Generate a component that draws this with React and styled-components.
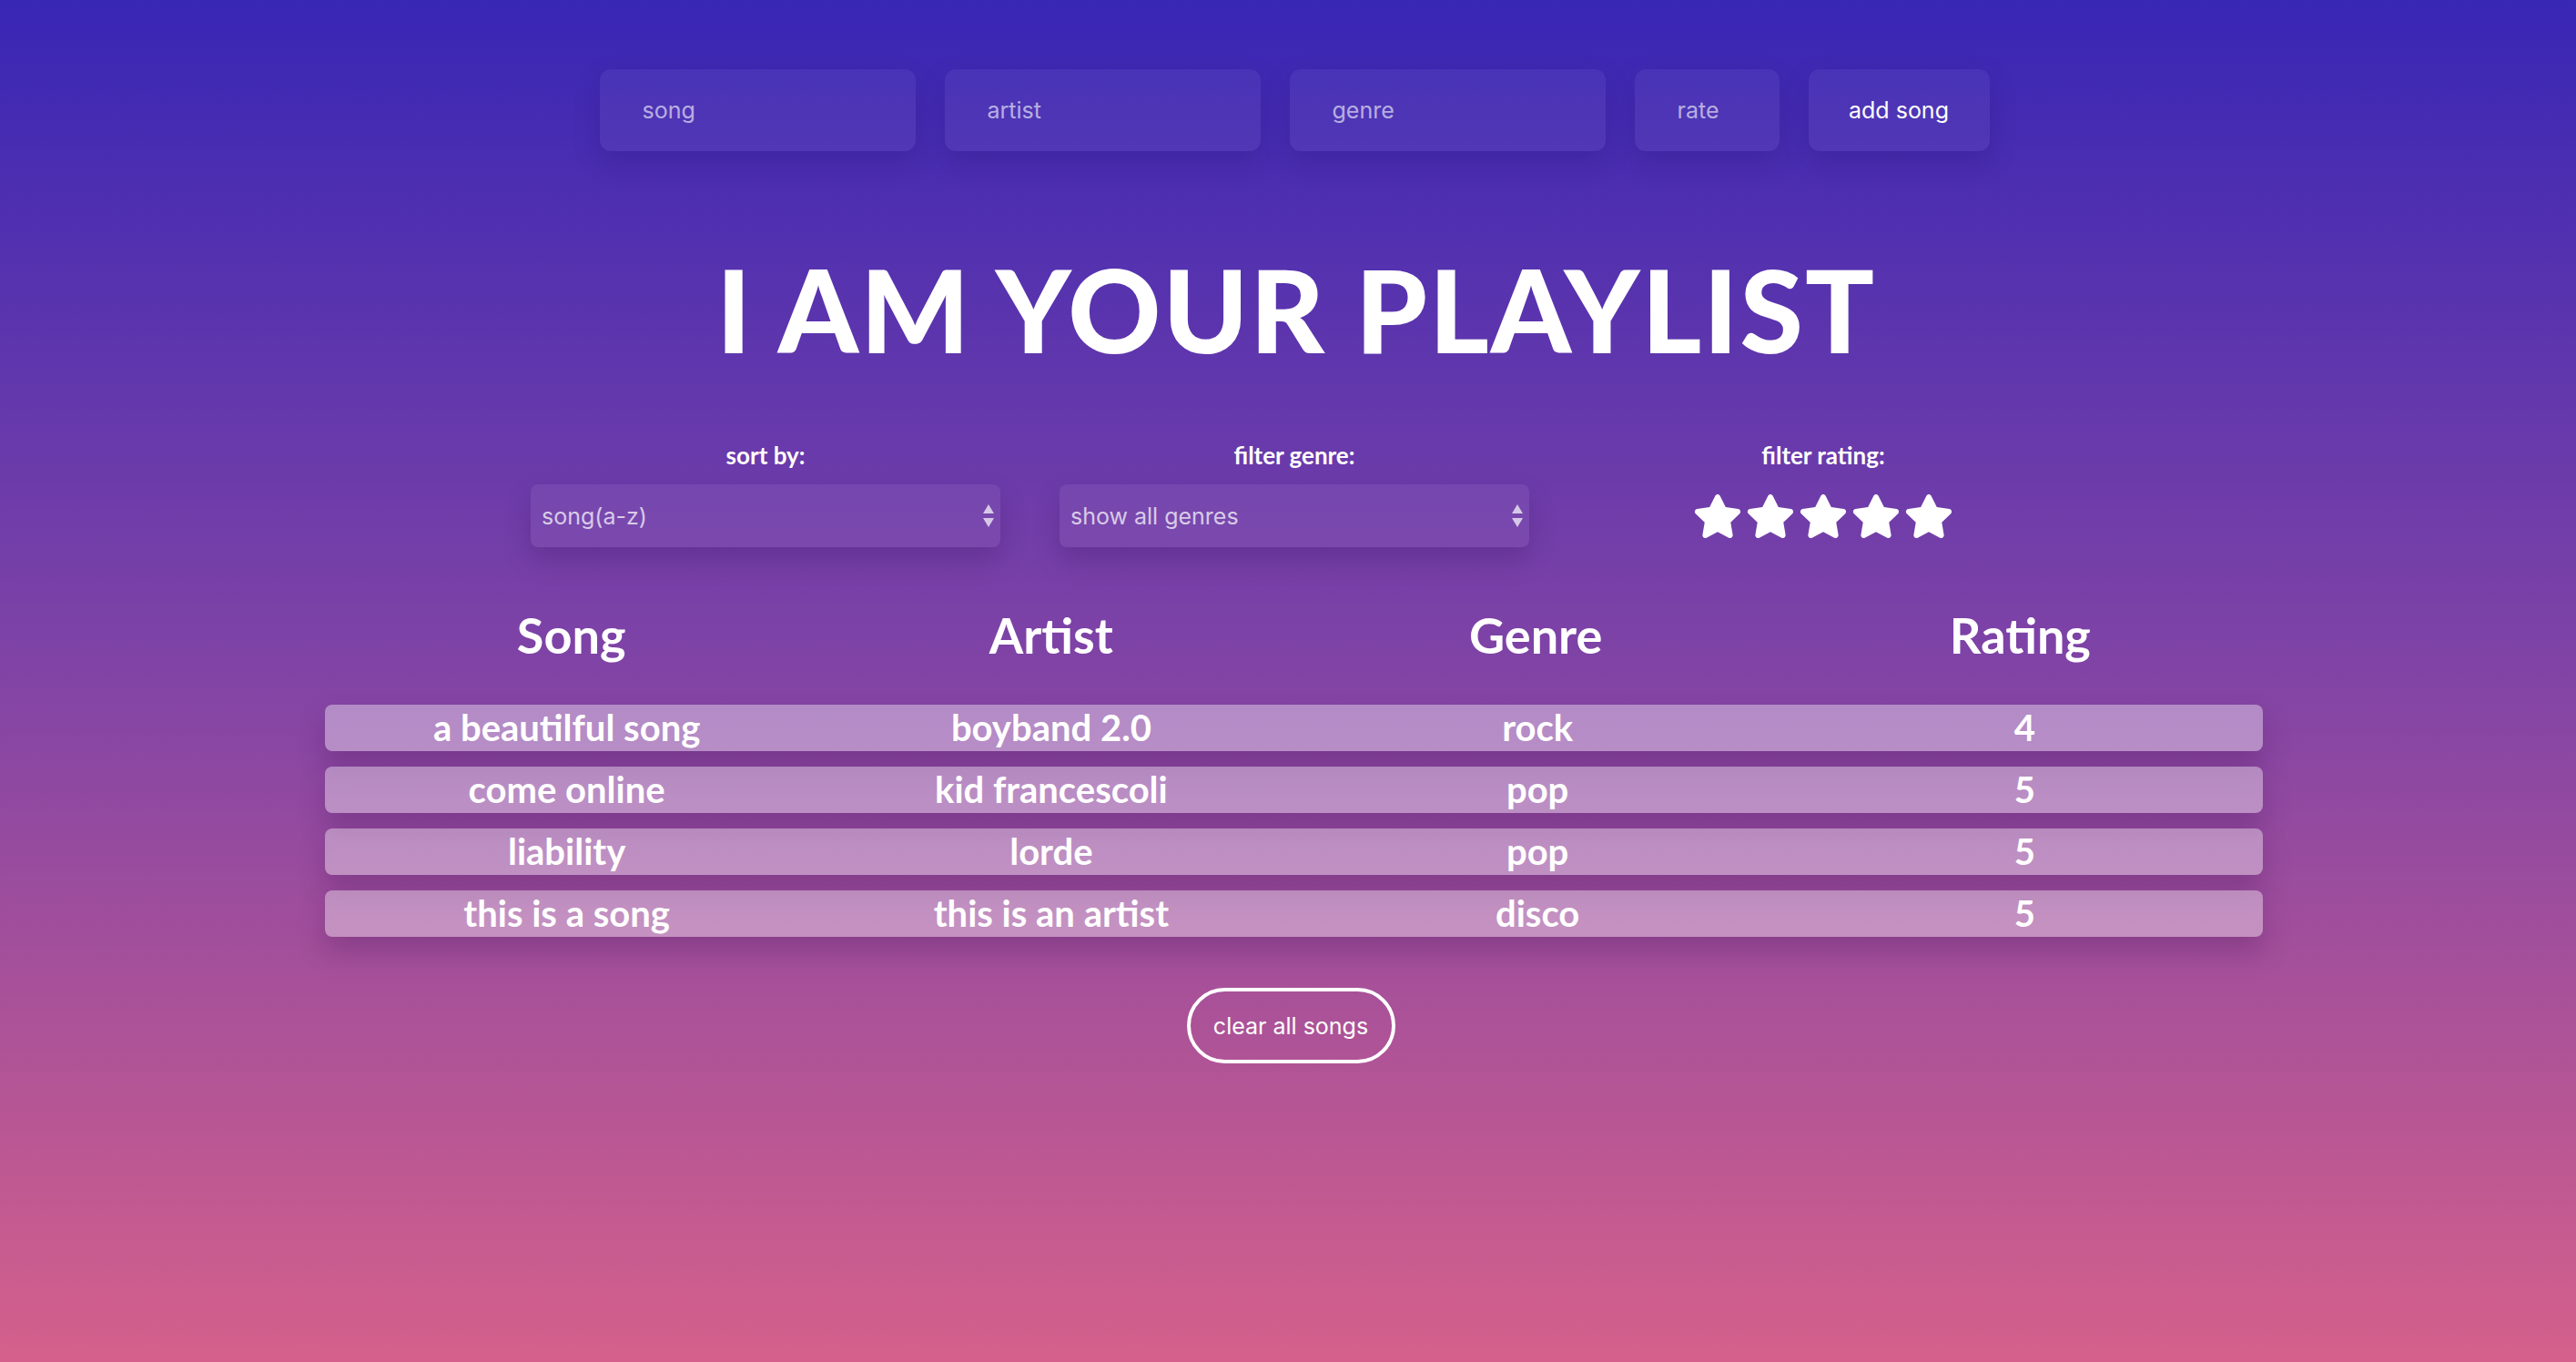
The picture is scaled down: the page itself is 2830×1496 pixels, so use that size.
import { createGlobalStyle } from "styled-components";
import styled from "styled-components";
import { FaStar } from "react-icons/fa";

const GlobalStyle = createGlobalStyle`
  html, body {
    margin: 0;
    padding: 0;
  }
  body {
    min-height: 100vh;
    background: linear-gradient(180deg, #3826b5 0%, #7f43a6 48%, #d5608b 100%);
    font-family: Inter, "Liberation Sans", sans-serif;
    color: #fff;
  }
`;

const Page = styled.div`
  min-height: 1496px;
  display: flex;
  flex-direction: column;
  align-items: center;
`;

const AddForm = styled.form`
  display: flex;
  gap: 32px;
  padding-top: 76px;
  margin-left: 14px;
`;

const Field = styled.input`
  box-sizing: border-box;
  width: ${(p) => p.$w}px;
  height: 90px;
  padding: 0 47px;
  border: none;
  border-radius: 12px;
  background: rgba(255, 255, 255, 0.05);
  box-shadow: 0 12px 30px rgba(20, 0, 80, 0.18);
  font-family: Inter, "Liberation Sans", sans-serif;
  font-size: 25px;
  color: #fff;
  outline: none;

  &::placeholder {
    color: rgba(255, 255, 255, 0.62);
  }
`;

const AddButton = styled.button`
  box-sizing: border-box;
  width: 199px;
  height: 90px;
  border: none;
  border-radius: 12px;
  background: rgba(255, 255, 255, 0.05);
  box-shadow: 0 12px 30px rgba(20, 0, 80, 0.18);
  font-family: Inter, "Liberation Sans", sans-serif;
  font-size: 25px;
  color: #fff;
`;

const Title = styled.h1`
  margin: 111px 0 0 18px;
  font-family: Lato, "DejaVu Sans", sans-serif;
  font-weight: 900;
  font-size: 126px;
  line-height: 1;
  letter-spacing: 2px;
`;

const Controls = styled.div`
  display: grid;
  grid-template-columns: 516px 516px 516px;
  column-gap: 65px;
  margin-top: 82px;
  margin-left: 14px;
`;

const Control = styled.div`
  display: flex;
  flex-direction: column;
  align-items: center;
  gap: 17px;
`;

const Label = styled.label`
  font-family: Lato, "DejaVu Sans", sans-serif;
  font-weight: 700;
  font-size: 26px;
  line-height: 30px;
`;

const SelectWrap = styled.div`
  position: relative;
  width: 100%;
`;

const Select = styled.select`
  box-sizing: border-box;
  width: 100%;
  height: 69px;
  padding: 0 12px;
  appearance: none;
  border: none;
  border-radius: 8px;
  background: rgba(255, 255, 255, 0.06);
  box-shadow: 0 14px 30px rgba(40, 0, 70, 0.2);
  font-family: Inter, "Liberation Sans", sans-serif;
  font-size: 25px;
  color: rgba(255, 255, 255, 0.72);
  outline: none;
`;

const Arrows = styled.svg`
  position: absolute;
  right: 6px;
  top: 22px;
  width: 14px;
  height: 26px;
  pointer-events: none;
`;

const Stars = styled.div`
  display: flex;
  gap: 4px;
  height: 69px;
  align-items: center;
  color: #fff;
  font-size: 54px;
`;

const Table = styled.div`
  width: 2129px;
  margin: 65px 0 0 12px;
`;

const HeaderRow = styled.div`
  display: grid;
  grid-template-columns: repeat(4, 1fr);
  margin-bottom: 44px;
`;

const Heading = styled.div`
  text-align: center;
  font-family: Lato, "DejaVu Sans", sans-serif;
  font-weight: 700;
  font-size: 54px;
  line-height: 64px;
  margin-left: ${(p) => p.$shift || 0}px;
`;

const Rows = styled.div`
  display: flex;
  flex-direction: column;
  gap: 17px;
`;

const Row = styled.div`
  display: grid;
  grid-template-columns: repeat(4, 1fr);
  align-items: center;
  height: 51px;
  border-radius: 8px;
  background: rgba(255, 255, 255, 0.38);
  box-shadow: 0 16px 30px rgba(60, 10, 80, 0.25);
`;

const Cell = styled.div`
  text-align: center;
  font-family: Lato, "DejaVu Sans", sans-serif;
  font-weight: 700;
  font-size: 40px;
  line-height: 51px;
  margin-left: ${(p) => p.$shift || 0}px;
`;

const ClearButton = styled.button`
  margin: 56px 0 0 6px;
  width: 229px;
  height: 83px;
  border: 4px solid #fff;
  border-radius: 42px;
  background: transparent;
  font-family: Inter, "Liberation Sans", sans-serif;
  font-size: 25px;
  color: #fff;
`;

const songs = [
  { song: "a beautilful song", artist: "boyband 2.0", genre: "rock", rating: 4 },
  { song: "come online", artist: "kid francescoli", genre: "pop", rating: 5 },
  { song: "liability", artist: "lorde", genre: "pop", rating: 5 },
  { song: "this is a song", artist: "this is an artist", genre: "disco", rating: 5 },
];

function SelectBox({ value }) {
  return (
    <SelectWrap>
      <Select defaultValue={value}>
        <option>{value}</option>
      </Select>
      <Arrows viewBox="0 0 14 26">
        <path d="M7 0 L13 10 L1 10 Z" fill="rgba(255,255,255,0.7)" />
        <path d="M1 15 L13 15 L7 25 Z" fill="rgba(255,255,255,0.7)" />
      </Arrows>
    </SelectWrap>
  );
}

export default function App() {
  return (
    <>
      <GlobalStyle />
      <Page>
        <AddForm onSubmit={(e) => e.preventDefault()}>
          <Field $w={347} placeholder="song" />
          <Field $w={347} placeholder="artist" />
          <Field $w={347} placeholder="genre" />
          <Field $w={159} placeholder="rate" />
          <AddButton type="submit">add song</AddButton>
        </AddForm>

        <Title>I AM YOUR PLAYLIST</Title>

        <Controls>
          <Control>
            <Label>sort by:</Label>
            <SelectBox value="song(a-z)" />
          </Control>
          <Control>
            <Label>filter genre:</Label>
            <SelectBox value="show all genres" />
          </Control>
          <Control>
            <Label>filter rating:</Label>
            <Stars>
              {[1, 2, 3, 4, 5].map((n) => (
                <FaStar key={n} />
              ))}
            </Stars>
          </Control>
        </Controls>

        <Table>
          <HeaderRow>
            <Heading $shift={10}>Song</Heading>
            <Heading>Artist</Heading>
            <Heading>Genre</Heading>
            <Heading>Rating</Heading>
          </HeaderRow>
          <Rows>
            {songs.map((s) => (
              <Row key={s.song}>
                <Cell>{s.song}</Cell>
                <Cell>{s.artist}</Cell>
                <Cell $shift={4}>{s.genre}</Cell>
                <Cell $shift={10}>{s.rating}</Cell>
              </Row>
            ))}
          </Rows>
        </Table>

        <ClearButton>clear all songs</ClearButton>
      </Page>
    </>
  );
}
